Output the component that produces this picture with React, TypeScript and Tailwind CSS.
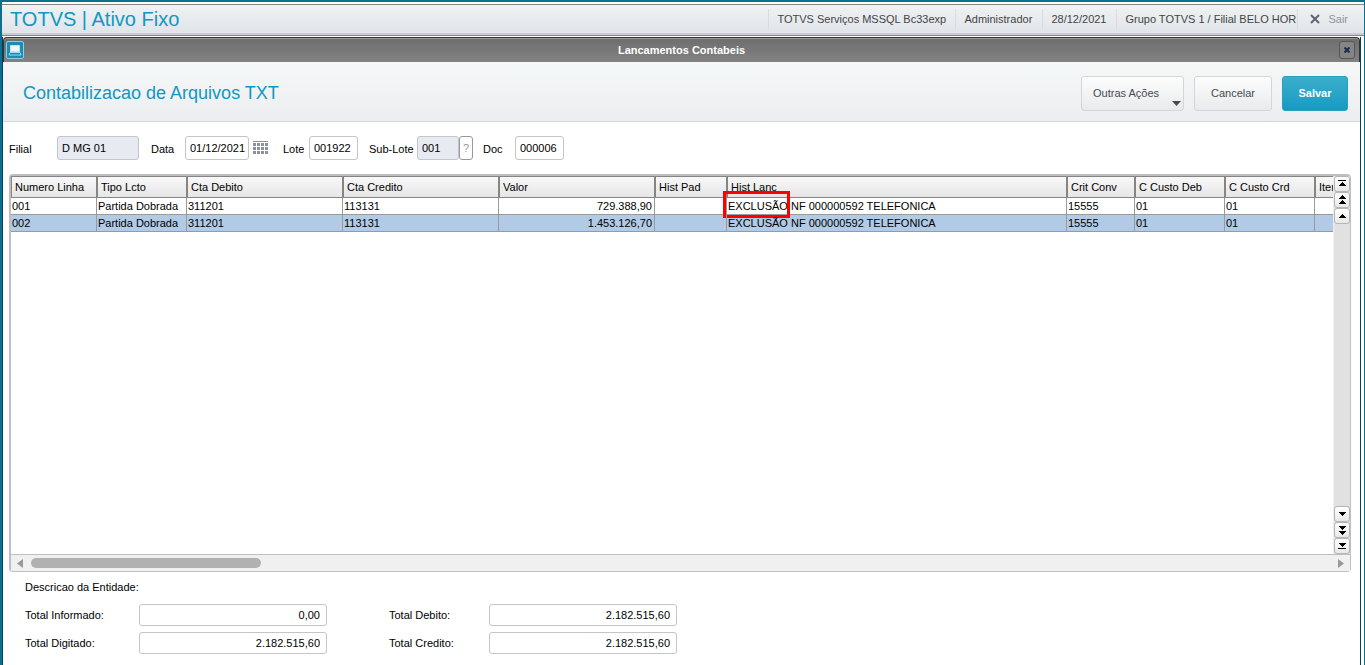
import type { ReactNode } from 'react'
import clsx from 'clsx'

interface Column {
  key: string
  title: string
  width: string
  align?: 'right'
}

interface Entry {
  [key: string]: string
}

const columns: Column[] = [
  { key: 'linha', title: 'Numero Linha', width: 'w-[86px]' },
  { key: 'tipo', title: 'Tipo Lcto', width: 'w-[90px]' },
  { key: 'debito', title: 'Cta Debito', width: 'w-[156px]' },
  { key: 'credito', title: 'Cta Credito', width: 'w-[156px]' },
  { key: 'valor', title: 'Valor', width: 'w-[156px]', align: 'right' },
  { key: 'histPad', title: 'Hist Pad', width: 'w-[72px]' },
  { key: 'histLanc', title: 'Hist Lanc', width: 'w-[340px]' },
  { key: 'crit', title: 'Crit Conv', width: 'w-[68px]' },
  { key: 'custoDeb', title: 'C Custo Deb', width: 'w-[90px]' },
  { key: 'custoCrd', title: 'C Custo Crd', width: 'w-[90px]' },
  { key: 'item', title: 'Item Conta', width: 'w-[90px]' },
]

const entries: Entry[] = [
  {
    linha: '001',
    tipo: 'Partida Dobrada',
    debito: '311201',
    credito: '113131',
    valor: '729.388,90',
    histLanc: 'EXCLUSÃO NF 000000592 TELEFONICA',
    crit: '15555',
    custoDeb: '01',
    custoCrd: '01',
  },
  {
    linha: '002',
    tipo: 'Partida Dobrada',
    debito: '311201',
    credito: '113131',
    valor: '1.453.126,70',
    histLanc: 'EXCLUSÃO NF 000000592 TELEFONICA',
    crit: '15555',
    custoDeb: '01',
    custoCrd: '01',
  },
]

const session = [
  { text: 'TOTVS Serviços MSSQL Bc33exp', width: 'w-[187px]' },
  { text: 'Administrador', width: 'w-[87px]' },
  { text: '28/12/2021', width: 'w-[74px]' },
  { text: 'Grupo TOTVS 1 / Filial BELO HOR', width: 'w-[181px]' },
]

const totals = [
  { id: 'informado', label: 'Total Informado:', value: '0,00' },
  { id: 'debito', label: 'Total Debito:', value: '2.182.515,60' },
  { id: 'digitado', label: 'Total Digitado:', value: '2.182.515,60' },
  { id: 'credito', label: 'Total Credito:', value: '2.182.515,60' },
]

function TopBar() {
  return (
    <header className="mt-0.5 flex h-8 items-center justify-between border-y border-[#858585] bg-linear-to-b from-[#f0f2f4] to-[#dfe3e8] pb-0.5 shadow-[inset_0_-2px_0_#c9cdd2]">
      <h1 className="pl-2 text-[20px] leading-6 text-[#1098c0]">TOTVS | Ativo Fixo</h1>
      <div className="flex h-5 items-center text-[#444]">
        {session.map((item) => (
          <span
            key={item.text}
            className={clsx(item.width, 'flex h-full items-center border-l border-[#d9dcda] pl-2 whitespace-nowrap')}
          >
            {item.text}
          </span>
        ))}
        <button className="flex h-full items-center gap-2 border-l border-[#d9dcda] pr-4 pl-3 text-[#8d939c]">
          <svg width="10" height="10" viewBox="0 0 10 10" aria-hidden="true">
            <path d="M1 1l8 8M9 1l-8 8" stroke="#5d6470" strokeWidth="2" />
          </svg>
          Sair
        </button>
      </div>
    </header>
  )
}

function TitleBar() {
  return (
    <div className="flex h-[25px] items-center justify-between rounded-t-sm border border-b-0 border-[#333] bg-linear-to-b from-[#6e6e6e] to-[#828282] pr-1 pl-0.5 shadow-[inset_0_1px_0_#999]">
      <svg width="18" height="18" viewBox="0 0 18 18" aria-hidden="true">
        <rect x="0.5" y="0.5" width="17" height="17" rx="1.5" fill="#178fb4" stroke="#8ed0e2" />
        <path d="M4.500 4.500h9v6h-9z" fill="#f1f3f5" stroke="#c2e5ef" />
        <path d="M4 11.500h10l1 2.500H3z" fill="#1586a8" stroke="#a9dbe8" />
      </svg>
      <h2 className="font-bold text-white">Lancamentos Contabeis</h2>
      <button
        aria-label="Fechar"
        className="flex h-[18px] w-4 items-center justify-center rounded-[3px] border border-[#555] bg-[#858585]"
      >
        <svg width="6" height="6" viewBox="0 0 6 6" aria-hidden="true">
          <path d="M.5 .5l5 5M5.5 .5l-5 5" stroke="#1f2a49" strokeWidth="2" />
        </svg>
      </button>
    </div>
  )
}

function Toolbar() {
  const base = 'h-[35px] rounded-[3px] border'
  const light = 'border-[#d3d5d7] bg-linear-to-b from-[#fdfdfd] to-[#e9eaeb] text-[#444b54]'
  return (
    <div className="flex h-[60px] items-start justify-between border-b border-[#d3d5d9] bg-linear-to-b from-[#f5f8f7] to-[#ecedf0] pt-3.5 pr-3 pl-5">
      <h3 className="text-[18px] leading-[34px] text-[#1098c0]">Contabilizacao de Arquivos TXT</h3>
      <div className="flex gap-2.5">
        <button className={clsx(base, light, 'flex w-[103px] items-center justify-between pr-0.5 pl-[11px]')}>
          Outras Ações
          <svg className="mb-1 self-end" width="9" height="5" viewBox="0 0 9 5" aria-hidden="true">
            <path d="M0 0h9L4.500 5z" fill="#444b54" />
          </svg>
        </button>
        <button className={clsx(base, light, 'w-[78px]')}>Cancelar</button>
        <button
          className={clsx(base, 'w-[66px] border-[#2c9fbe] bg-linear-to-b from-[#3aaecb] to-[#129bc2] font-bold text-white')}
        >
          Salvar
        </button>
      </div>
    </div>
  )
}

interface FieldProps {
  id: string
  label: string
  value: string
  labelWidth: string
  width: string
  readOnly?: boolean
  children?: ReactNode
}

function Field({ id, label, value, labelWidth, width, readOnly, children }: FieldProps) {
  return (
    <div className="flex items-center">
      <label htmlFor={id} className={clsx(labelWidth, 'pt-0.5')}>
        {label}
      </label>
      <input
        id={id}
        defaultValue={value}
        readOnly={readOnly}
        className={clsx(
          width,
          'h-6 rounded-[3px] border border-[#c3c6c8] pr-px pl-1',
          readOnly ? 'bg-[#e7eaf1]' : 'bg-white',
        )}
      />
      {children}
    </div>
  )
}

function CalendarIcon() {
  return (
    <svg width="15" height="14" viewBox="0 0 15 14" fill="#8b929b" shapeRendering="crispEdges" aria-hidden="true">
      <rect width="15" height="1" />
      {[2, 6, 10].map((y) => [0, 4, 8, 12].map((x) => <rect key={`${x}-${y}`} x={x} y={y} width="3" height="3" />))}
    </svg>
  )
}

function Filters() {
  return (
    <form className="flex items-center px-1.5 py-3.5">
      <Field id="filial" label="Filial" value="D MG 01" labelWidth="w-12" width="w-[82px]" readOnly />
      <div className="w-3" />
      <Field id="data" label="Data" value="01/12/2021" labelWidth="w-[34px]" width="w-16">
        <button type="button" aria-label="Calendário" className="px-1">
          <CalendarIcon />
        </button>
      </Field>
      <div className="w-[11px]" />
      <Field id="lote" label="Lote" value="001922" labelWidth="w-[26px]" width="w-[49px]" />
      <div className="w-[11px]" />
      <Field id="sublote" label="Sub-Lote" value="001" labelWidth="w-12" width="w-[42px]" readOnly>
        <button type="button" aria-label="Consultar" className="h-6 w-3.5 rounded-[3px] border border-[#999] bg-white text-[#999]">
          ?
        </button>
      </Field>
      <div className="w-2.5" />
      <Field id="doc" label="Doc" value="000006" labelWidth="w-8" width="w-[49px]" />
    </form>
  )
}

function ScrollButton({ label, path }: { label: string; path: string }) {
  return (
    <button
      aria-label={label}
      className="flex h-4 w-4 items-center justify-center rounded-[3px] border border-[#b5b5b5] bg-linear-to-b from-white to-[#e8e8e8]"
    >
      <svg width="8" height="10" viewBox="0 0 8 10" shapeRendering="crispEdges" aria-hidden="true">
        <path d={path} />
      </svg>
    </button>
  )
}

function VerticalScroll() {
  return (
    <div className="flex w-4 shrink-0 flex-col items-center justify-between bg-[#e1e1e1]">
      <div>
        <ScrollButton label="Início" path="M0 1h8v1H0zM4 3l4 4H0z" />
        <ScrollButton label="Página acima" path="M4 0l4 4H0zM4 5l4 4H0z" />
        <ScrollButton label="Linha acima" path="M4 3l4 4H0z" />
      </div>
      <div>
        <ScrollButton label="Linha abaixo" path="M0 3h8L4 7z" />
        <ScrollButton label="Página abaixo" path="M0 1h8L4 5zM0 6h8L4 10z" />
        <ScrollButton label="Fim" path="M0 2h8L4 6zM0 7h8v1H0z" />
      </div>
    </div>
  )
}

function HorizontalScroll() {
  return (
    <div className="flex h-[17px] items-center border-t border-[#bfbfbf] bg-[#f0f0f0] px-1.5">
      <svg width="6" height="9" viewBox="0 0 6 9" aria-hidden="true">
        <path d="M6 0v9L0 4.500z" fill="#999" />
      </svg>
      <div className="flex-1 px-2">
        <div className="h-2.5 w-[230px] rounded-full bg-[#b1b1b1]" />
      </div>
      <svg width="6" height="9" viewBox="0 0 6 9" aria-hidden="true">
        <path d="M0 0v9l6-4.500z" fill="#999" />
      </svg>
    </div>
  )
}

function EntriesGrid() {
  return (
    <div className="mr-[9px] ml-1.5 flex min-h-48 flex-1 flex-col rounded-sm border-t-2 border-r border-b border-l-2 border-[#bfbfbf]">
      <div className="flex flex-1">
        <div className="min-w-0 flex-1 overflow-hidden border-r border-[#eee]">
          <table className="w-[1394px] table-fixed border-separate border-spacing-0">
            <thead>
              <tr>
                {columns.map((col) => (
                  <th
                    key={col.key}
                    className={clsx(
                      col.width,
                      'h-[22px] border border-[#858585] bg-linear-to-b from-[#f8f8f8] to-[#e6e6e6] px-[3px] text-left font-normal',
                    )}
                  >
                    {col.title}
                  </th>
                ))}
              </tr>
            </thead>
            <tbody>
              {entries.map((entry, row) => (
                <tr key={entry.linha} className={row === 1 ? 'bg-[#b1cae6]' : 'bg-white'}>
                  {columns.map((col) => (
                    <td
                      key={col.key}
                      className={clsx(
                        'relative h-[17px] border-r border-b border-[#9a9a9a] px-px leading-4 whitespace-nowrap',
                        col.align === 'right' && 'pr-0.5 text-right',
                      )}
                    >
                      {entry[col.key]}
                      {row === 0 && col.key === 'histLanc' && (
                        <div className="absolute -top-[7px] -left-1 h-[27px] w-[67px] border-3 border-[#ff0000]" />
                      )}
                    </td>
                  ))}
                </tr>
              ))}
            </tbody>
          </table>
        </div>
        <VerticalScroll />
      </div>
      <HorizontalScroll />
    </div>
  )
}

function Totals() {
  return (
    <section className="px-[22px] pt-1.5 pb-[11px]">
      <p className="leading-[18px]">Descricao da Entidade:</p>
      <div className="grid grid-cols-[302px_288px] gap-x-[62px] gap-y-1.5 pt-2">
        {totals.map((total) => (
          <div key={total.id} className="flex items-center justify-between">
            <label htmlFor={`total-${total.id}`}>{total.label}</label>
            <input
              id={`total-${total.id}`}
              defaultValue={total.value}
              className="h-[22px] w-[188px] rounded-[3px] border border-[#c3c6c8] bg-white px-1.5 text-right"
            />
          </div>
        ))}
      </div>
    </section>
  )
}

export default function App() {
  return (
    <div className="flex min-h-screen flex-col border-t-2 border-r border-l-2 border-[#0b6f8e] bg-white font-['Liberation_Sans',Arial,sans-serif] text-[11px] text-black">
      <TopBar />
      <main className="mt-px mr-[3px] flex flex-1 flex-col border-r border-l border-r-[#0c3c66] border-l-[#0c3c66]">
        <TitleBar />
        <Toolbar />
        <Filters />
        <EntriesGrid />
        <Totals />
      </main>
    </div>
  )
}
